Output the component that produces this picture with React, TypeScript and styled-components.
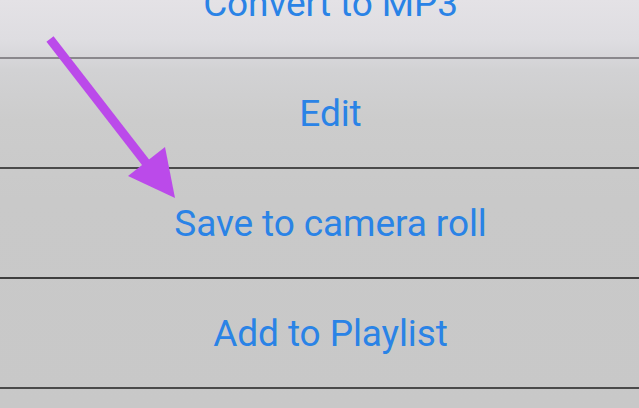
import React from "react";
import styled, { createGlobalStyle } from "styled-components";

const Global = createGlobalStyle`
  html, body { margin: 0; padding: 0; }
  body {
    width: 639px;
    height: 408px;
    overflow: hidden;
    background: #c9c9c9;
  }
`;

const Screen = styled.div`
  position: relative;
  width: 639px;
  height: 408px;
  overflow: hidden;
  background: linear-gradient(
    180deg,
    #e4e2e6 0px,
    #dedde1 40px,
    #d2d2d4 70px,
    #cccccc 120px,
    #c9c9c9 200px,
    #c8c8c8 408px
  );
`;

const Sheet = styled.div`
  display: flex;
  flex-direction: column;
  margin-top: -51px;
`;

const Row = styled.div<{ $line: string }>`
  box-sizing: border-box;
  height: 110px;
  display: flex;
  align-items: center;
  justify-content: center;
  padding-left: 22px;
  border-bottom: 2px solid ${(p) => p.$line};
  font-family: Roboto, "Liberation Sans", sans-serif;
  font-size: 37px;
  color: #2a83e6;
  letter-spacing: -0.1px;
`;

const Arrow = styled.svg`
  position: absolute;
  left: 0;
  top: 0;
  pointer-events: none;
`;

const items = [
  { label: "Convert to MP3", line: "#8a888c" },
  { label: "Edit", line: "#4a4a4a" },
  { label: "Save to camera roll", line: "#3e3e3e" },
  { label: "Add to Playlist", line: "#4a4a4a" },
  { label: "", line: "#4a4a4a" },
];

export default function App() {
  return (
    <>
      <Global />
      <Screen>
        <Sheet>
          {items.map((it, i) => (
            <Row key={i} $line={it.line}>
              {it.label}
            </Row>
          ))}
        </Sheet>
        <Arrow width="639" height="408" viewBox="0 0 639 408">
          <line
            x1="50"
            y1="39"
            x2="150"
            y2="168"
            stroke="#bb4aea"
            strokeWidth="9"
          />
          <polygon points="128,176 165,147 175,198" fill="#bb4aea" />
        </Arrow>
      </Screen>
    </>
  );
}
